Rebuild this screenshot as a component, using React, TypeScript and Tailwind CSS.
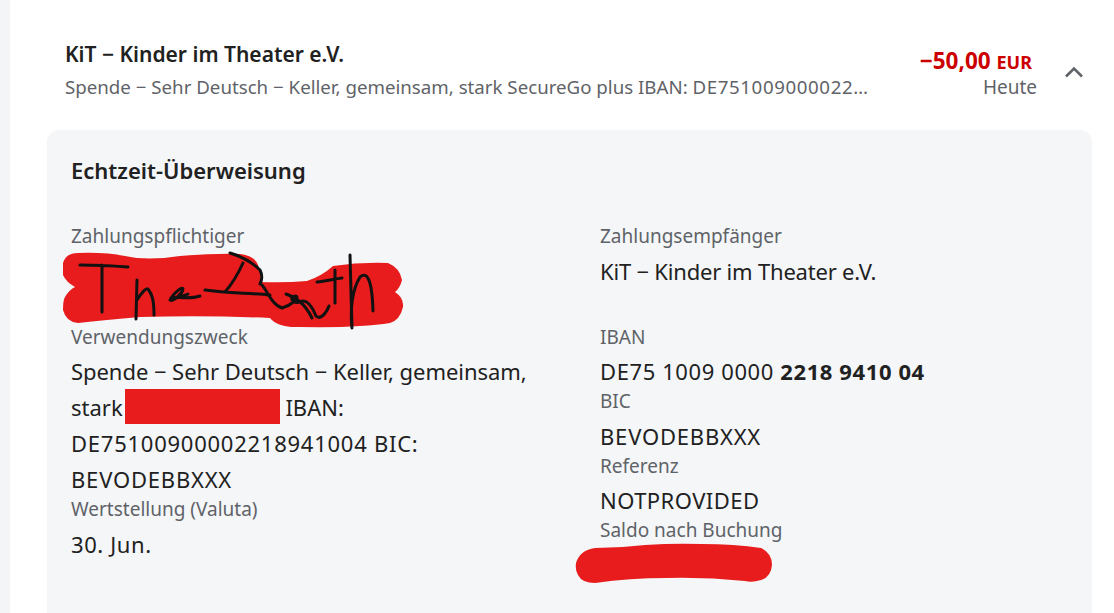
import React from "react";

const font = { fontFamily: '"Noto Sans", sans-serif' };

function Field({ label, children, extra }: { label: string; children?: React.ReactNode; extra?: boolean }) {
  return (
    <div className={extra ? "pb-[37px]" : "pb-[1px]"}>
      <div className="h-[22px] text-[19px] leading-[22px] text-[#5f6368] mb-[5.5px]">{label}</div>
      <div className="min-h-[36px] text-[22px] leading-[36px] text-[#212121]">{children}</div>
    </div>
  );
}

export default function App() {
  return (
    <div style={font} className="relative w-[1114px] h-[613px] overflow-hidden bg-white flex">
      <div className="w-[10px] shrink-0 bg-[#f4f5f7]" />
      <div className="flex-1 min-w-0 flex flex-col">
        <div className="h-[130px] shrink-0 flex pl-[55px] pr-[29px] pt-[41px]">
          <div className="w-[805px] min-w-0">
            <div className="text-[21px] leading-[27px] font-semibold text-[#212121]">KiT − Kinder im Theater e.V.</div>
            <div className="mt-[5px] text-[18.7px] leading-[27px] text-[#5f6368] whitespace-nowrap">
              Spende − Sehr Deutsch − Keller, gemeinsam, stark SecureGo plus IBAN:{" "}
              <span className="tracking-[0.6px]">DE751009000022…</span>
            </div>
          </div>
          <div className="flex-1 flex flex-col items-end pt-[5px] pr-[39px]">
            <div className="pr-[5px] leading-[30px] font-bold text-[#cc0000] text-[22.5px]">
              −50,00 <span className="text-[18px]">EUR</span>
            </div>
            <div className="text-[19px] leading-[24px] text-[#5f6368] mt-[-2px]">Heute</div>
          </div>
          <svg width="22" height="14" viewBox="0 0 22 14" className="mt-[24px] ml-[-13px] shrink-0 text-[#5f6368]" fill="none" stroke="currentColor" strokeWidth="2.6">
            <path d="M3 11.5 L11 3.5 L19 11.5" />
          </svg>
        </div>
        <div className="ml-[37px] mr-[22px] flex-1 rounded-t-[12px] bg-[#f4f6f8] pl-[24px] pt-[25px]">
          <div className="text-[22px] leading-[30px] font-semibold text-[#212121]">Echtzeit-Überweisung</div>
          <div className="mt-[40px] flex">
            <div className="w-[529px] shrink-0 pr-[30px]">
              <Field label="Zahlungspflichtiger" extra />
              <Field label="Verwendungszweck">
                <span className="tracking-[-0.05px]">Spende − Sehr Deutsch − Keller, gemeinsam,</span>
                <br />
                stark
                <span className="inline-block w-[155px] h-[35px] align-top ml-[2px] bg-[#e81c1c]" /> IBAN:
                <br />
                <span className="tracking-[0.75px]">DE75100900002218941004 BIC:</span>
                <br />
                <span className="tracking-[0.8px]">BEVODEBBXXX</span>
              </Field>
              <Field label="Wertstellung (Valuta)">
                <span className="tracking-[0.6px]">30. Jun.</span>
              </Field>
            </div>
            <div className="flex-1">
              <Field label="Zahlungsempfänger" extra>
                <span className="tracking-[-0.2px]">KiT − Kinder im Theater e.V.</span>
              </Field>
              <Field label="IBAN">
                <span className="tracking-[0.6px]">
                  DE75 1009 0000 <b className="font-bold">2218 9410 04</b>
                </span>
              </Field>
              <Field label="BIC">
                <span className="tracking-[0.8px]">BEVODEBBXXX</span>
              </Field>
              <Field label="Referenz">
                <span className="tracking-[0.45px]">NOTPROVIDED</span>
              </Field>
              <Field label="Saldo nach Buchung" />
            </div>
          </div>
        </div>
      </div>
      <svg className="absolute left-0 top-0 pointer-events-none" width="1114" height="613" viewBox="0 0 1114 613" fill="none">
        <path
          d="M63 263 Q66 253 78 253 Q105 252 125 256 Q147 261 180 256 Q220 253 240 254 Q255 256 258 265 Q262 275 260 282 Q285 283 307 281 Q322 276 333 266 Q360 262 388 263 Q400 268 402 280 Q400 288 395 292 Q404 298 403 307 Q400 320 390 323 Q360 328 300 327 Q278 328 270 318 Q205 315 140 317 Q105 320 78 323 Q66 322 63 310 Q63 300 65 297 Q69 290 75 287 Q66 282 63 275 Z"
          fill="#e81c1c"
        />
        <path
          d="M595 548 Q620 548 645 545 Q675 543 701 544 Q735 544 761 548 Q772 553 772 565 Q771 577 761 580 Q752 583 745 581 Q705 577 666 578 Q630 578 595 583 Q582 583 578 575 Q575 570 576 563 Q580 550 595 548 Z"
          fill="#e81c1c"
        />
        <g stroke="#111" strokeWidth="3" strokeLinecap="round" strokeLinejoin="round">
          <path d="M80 265 C100 265 115 266 128 267 M102 265 L102 312" />
          <path d="M137 280 L136 319 M137 300 C142 292 146 288 148 289 C152 294 154 300 154 315" />
          <path d="M170 300 C176 290 186 284 182 292 C176 300 168 303 171 298 C176 296 188 300 200 296 M176 298 C182 296 186 295 188 294" />
          <path d="M205 290 C225 293 250 293 270 295 M230 253 C240 256 252 262 260 270 C263 276 262 280 260 284 M243 263 C238 274 232 284 225 292" />
          <path d="M262 285 C268 292 272 305 282 308 C290 306 300 298 296 296 C288 296 292 304 300 302 C306 298 312 306 316 316 C320 320 326 314 329 306 M286 294 C296 298 304 302 312 318" />
          <path d="M317 282 C325 281 335 279 342 278 M335 270 L335 303" />
          <path d="M350 255 L352 328 C350 310 352 290 360 277 C366 272 372 276 373 311" />
        </g>
      </svg>
    </div>
  );
}
